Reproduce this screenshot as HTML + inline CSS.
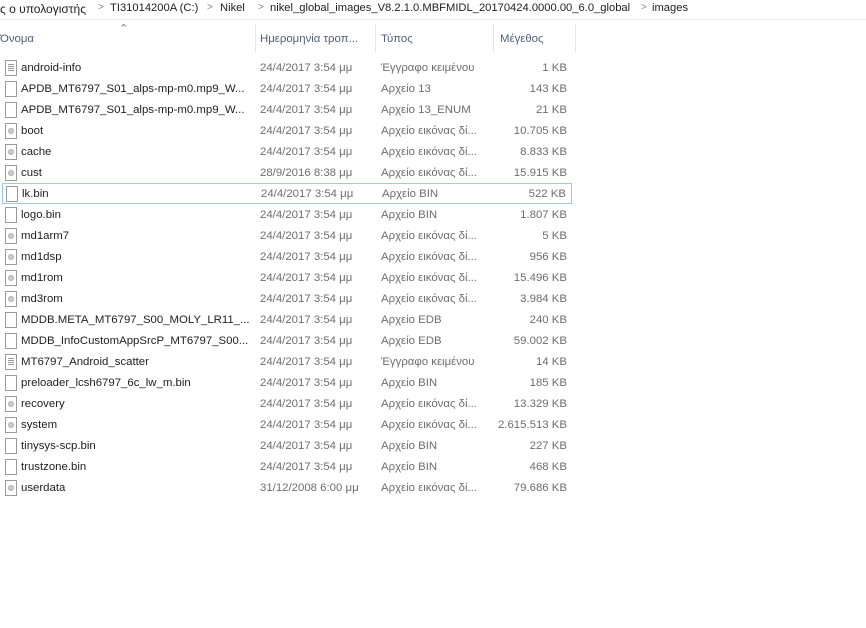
<!DOCTYPE html>
<html><head><meta charset="utf-8"><style>
body{margin:0;width:866px;height:628px;background:#fff;font-family:"Liberation Sans","DejaVu Sans",sans-serif;font-size:11.4px;color:#1e1e1e;position:relative;overflow:hidden}
.a{position:absolute;white-space:nowrap}
.bc{top:2px;font-size:11.2px}
.sep{color:#8a8a8a;font-size:10px;top:2px}
.h{top:33px;color:#4c607a}
.vs{position:absolute;top:24px;height:28px;width:1px;background:#e5e5e5}
.row{position:absolute;left:0;width:575px;height:21px}
.row span{position:absolute;top:5px;white-space:nowrap}
.n{left:21px}
.d{left:260px;color:#6d6d6d}
.t{left:381px;color:#6d6d6d}
.s{right:8px;color:#6d6d6d}
.ic{position:absolute;left:5px;top:3px;width:10px;height:14px;border:1px solid #9a9a9a;background:#fff}
.ic.tx::after{content:"";position:absolute;left:2px;top:3px;width:6px;height:8px;background:repeating-linear-gradient(#9a9a9a 0 1px,transparent 1px 2px)}
.ic.dk::after{content:"";position:absolute;left:2px;top:4px;width:6px;height:6px;border-radius:50%;background:radial-gradient(#ddd,#999)}
.sel{border:1px solid #99c9ef;box-sizing:border-box;left:2px;width:570px}
</style></head><body>
<div class="a bc" style="left:0;font-size:12px">ς ο υπολογιστής</div>
<div class="a sep" style="left:98px">&gt;</div>
<div class="a bc" style="left:110px">TI31014200A (C:)</div>
<div class="a sep" style="left:207px">&gt;</div>
<div class="a bc" style="left:220px">Nikel</div>
<div class="a sep" style="left:258px">&gt;</div>
<div class="a bc" style="left:270px">nikel_global_images_V8.2.1.0.MBFMIDL_20170424.0000.00_6.0_global</div>
<div class="a sep" style="left:641px">&gt;</div>
<div class="a bc" style="left:652px">images</div>
<div class="a" style="left:0;top:19px;width:866px;height:1px;background:#f0f0f0"></div>
<div class="a" style="left:119px;top:22px;color:#777;font-size:11px">&#8963;</div>
<div class="a h" style="left:0">Όνομα</div>
<div class="a h" style="left:260px">Ημερομηνία τροπ...</div>
<div class="a h" style="left:381px">Τύπος</div>
<div class="a h" style="left:500px">Μέγεθος</div>
<div class="vs" style="left:255px"></div><div class="vs" style="left:375px"></div><div class="vs" style="left:493px"></div><div class="vs" style="left:575px"></div>

<div class="row" style="top:57px"><i class="ic tx"></i><span class="n">android-info</span><span class="d">24/4/2017 3:54 μμ</span><span class="t">Έγγραφο κειμένου</span><span class="s">1 KB</span></div>
<div class="row" style="top:78px"><i class="ic"></i><span class="n">APDB_MT6797_S01_alps-mp-m0.mp9_W...</span><span class="d">24/4/2017 3:54 μμ</span><span class="t">Αρχείο 13</span><span class="s">143 KB</span></div>
<div class="row" style="top:99px"><i class="ic"></i><span class="n">APDB_MT6797_S01_alps-mp-m0.mp9_W...</span><span class="d">24/4/2017 3:54 μμ</span><span class="t">Αρχείο 13_ENUM</span><span class="s">21 KB</span></div>
<div class="row" style="top:120px"><i class="ic dk"></i><span class="n">boot</span><span class="d">24/4/2017 3:54 μμ</span><span class="t">Αρχείο εικόνας δί...</span><span class="s">10.705 KB</span></div>
<div class="row" style="top:141px"><i class="ic dk"></i><span class="n">cache</span><span class="d">24/4/2017 3:54 μμ</span><span class="t">Αρχείο εικόνας δί...</span><span class="s">8.833 KB</span></div>
<div class="row" style="top:162px"><i class="ic dk"></i><span class="n">cust</span><span class="d">28/9/2016 8:38 μμ</span><span class="t">Αρχείο εικόνας δί...</span><span class="s">15.915 KB</span></div>
<div class="row sel" style="top:183px"><i class="ic" style="left:3px;top:2px"></i><span class="n" style="left:19px;top:4px">lk.bin</span><span class="d" style="left:258px;top:4px">24/4/2017 3:54 μμ</span><span class="t" style="left:379px;top:4px">Αρχείο BIN</span><span class="s" style="right:5px;top:4px">522 KB</span></div>
<div class="row" style="top:204px"><i class="ic"></i><span class="n">logo.bin</span><span class="d">24/4/2017 3:54 μμ</span><span class="t">Αρχείο BIN</span><span class="s">1.807 KB</span></div>
<div class="row" style="top:225px"><i class="ic dk"></i><span class="n">md1arm7</span><span class="d">24/4/2017 3:54 μμ</span><span class="t">Αρχείο εικόνας δί...</span><span class="s">5 KB</span></div>
<div class="row" style="top:246px"><i class="ic dk"></i><span class="n">md1dsp</span><span class="d">24/4/2017 3:54 μμ</span><span class="t">Αρχείο εικόνας δί...</span><span class="s">956 KB</span></div>
<div class="row" style="top:267px"><i class="ic dk"></i><span class="n">md1rom</span><span class="d">24/4/2017 3:54 μμ</span><span class="t">Αρχείο εικόνας δί...</span><span class="s">15.496 KB</span></div>
<div class="row" style="top:288px"><i class="ic dk"></i><span class="n">md3rom</span><span class="d">24/4/2017 3:54 μμ</span><span class="t">Αρχείο εικόνας δί...</span><span class="s">3.984 KB</span></div>
<div class="row" style="top:309px"><i class="ic"></i><span class="n">MDDB.META_MT6797_S00_MOLY_LR11_...</span><span class="d">24/4/2017 3:54 μμ</span><span class="t">Αρχείο EDB</span><span class="s">240 KB</span></div>
<div class="row" style="top:330px"><i class="ic"></i><span class="n">MDDB_InfoCustomAppSrcP_MT6797_S00...</span><span class="d">24/4/2017 3:54 μμ</span><span class="t">Αρχείο EDB</span><span class="s">59.002 KB</span></div>
<div class="row" style="top:351px"><i class="ic tx"></i><span class="n">MT6797_Android_scatter</span><span class="d">24/4/2017 3:54 μμ</span><span class="t">Έγγραφο κειμένου</span><span class="s">14 KB</span></div>
<div class="row" style="top:372px"><i class="ic"></i><span class="n">preloader_lcsh6797_6c_lw_m.bin</span><span class="d">24/4/2017 3:54 μμ</span><span class="t">Αρχείο BIN</span><span class="s">185 KB</span></div>
<div class="row" style="top:393px"><i class="ic dk"></i><span class="n">recovery</span><span class="d">24/4/2017 3:54 μμ</span><span class="t">Αρχείο εικόνας δί...</span><span class="s">13.329 KB</span></div>
<div class="row" style="top:414px"><i class="ic dk"></i><span class="n">system</span><span class="d">24/4/2017 3:54 μμ</span><span class="t">Αρχείο εικόνας δί...</span><span class="s">2.615.513 KB</span></div>
<div class="row" style="top:435px"><i class="ic"></i><span class="n">tinysys-scp.bin</span><span class="d">24/4/2017 3:54 μμ</span><span class="t">Αρχείο BIN</span><span class="s">227 KB</span></div>
<div class="row" style="top:456px"><i class="ic"></i><span class="n">trustzone.bin</span><span class="d">24/4/2017 3:54 μμ</span><span class="t">Αρχείο BIN</span><span class="s">468 KB</span></div>
<div class="row" style="top:477px"><i class="ic dk"></i><span class="n">userdata</span><span class="d">31/12/2008 6:00 μμ</span><span class="t">Αρχείο εικόνας δί...</span><span class="s">79.686 KB</span></div>
</body></html>
